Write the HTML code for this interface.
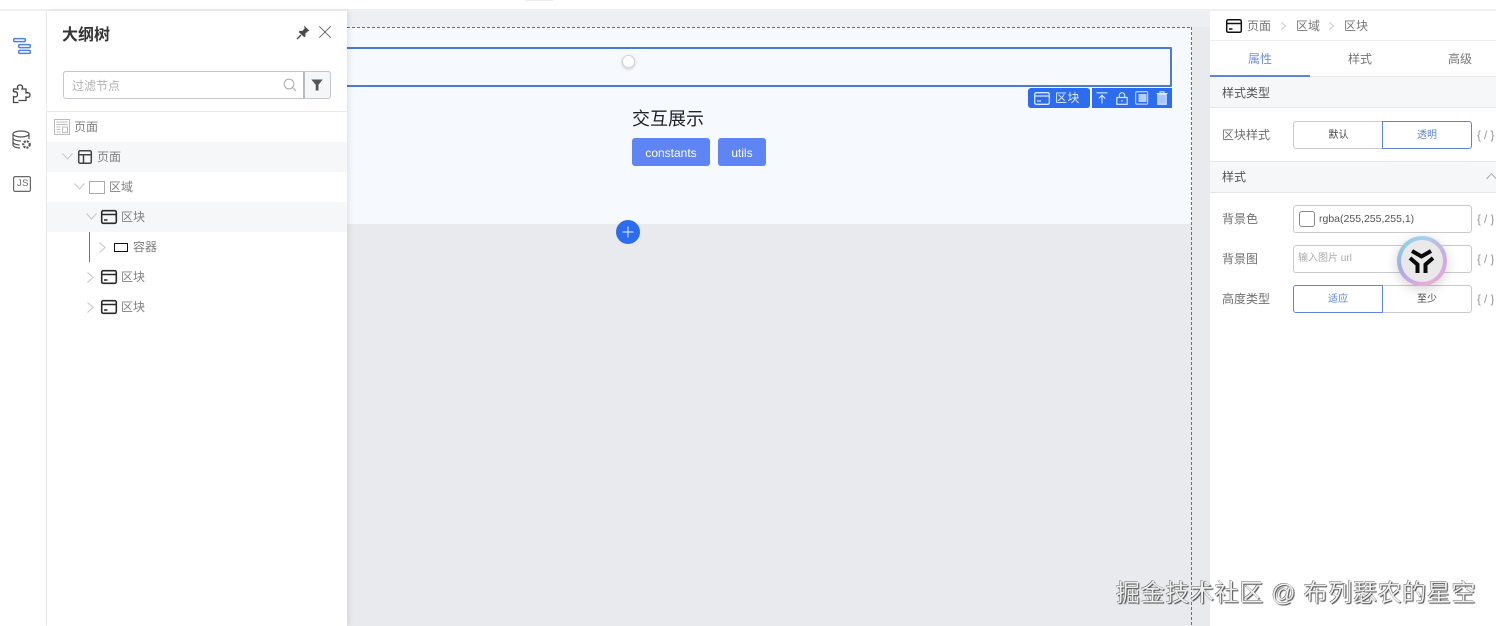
<!DOCTYPE html>
<html lang="zh"><head><meta charset="utf-8">
<style>
html,body{margin:0;padding:0;width:1496px;height:626px;overflow:hidden;background:#fff;font-family:"Liberation Sans","Noto Sans CJK SC",sans-serif;}
.a{position:absolute;box-sizing:border-box;}
.t{position:absolute;white-space:nowrap;line-height:16px;}
svg{position:absolute;overflow:visible;}
.tree{font-size:12px;color:#808080;}
.rl{font-size:12px;color:#707070;}
.ex{font-size:12px;color:#999;letter-spacing:3px;}
</style></head><body>
<div class="a" style="left:0;top:0;width:1496px;height:626px;overflow:hidden">
<!-- top -->
<div class="a" style="left:0;top:9px;width:1496px;height:2px;background:#eeeff1"></div>
<div class="a" style="left:525px;top:0;width:28px;height:1px;background:#eee"></div>

<!-- canvas -->
<div class="a" style="left:347px;top:11px;width:863px;height:615px;background:#e8eaed"></div>
<div class="a" style="left:347px;top:11px;width:863px;height:16px;background:#eeeff2"></div>
<div class="a" style="left:347px;top:27px;width:845px;height:197px;background:#f6faff"></div>
<div class="a" style="left:347px;top:27px;width:845px;height:1px;background:repeating-linear-gradient(90deg,#3a70e0 0 3px,transparent 3px 5px)"></div>
<div class="a" style="left:1191px;top:27px;width:1px;height:599px;background:repeating-linear-gradient(180deg,#3a70e0 0 3px,transparent 3px 5px)"></div>
<div class="a" style="left:340px;top:47px;width:832px;height:40px;border:2px solid #4a7bd6;border-radius:1px"></div>
<div class="a" style="left:622px;top:55px;width:13px;height:13px;border-radius:50%;background:#fff;border:1px solid #d4d4d4;box-shadow:0 1px 3px rgba(0,0,0,.2)"></div>

<!-- block toolbar -->
<div class="a" style="left:1028px;top:88px;width:62px;height:20px;background:#2b6cf0;border-radius:3px"></div>
<svg style="left:1034px;top:92px" width="16" height="13" viewBox="0 0 16 13" fill="none" stroke="#d9e6ff" stroke-width="1.3"><rect x=".7" y=".7" width="14.6" height="11.6" rx="1.5"/><path d="M1 4h14M3 9h4"/></svg>
<div class="t" style="left:1055px;top:90px;font-size:12px;color:#e3ecff;letter-spacing:.5px">区块</div>
<div class="a" style="left:1092px;top:88px;width:80px;height:20px;background:#2b6cf0"></div>
<svg style="left:1096px;top:92px" width="12" height="12" viewBox="0 0 12 12" fill="none" stroke="#dbe7ff" stroke-width="1.1"><path d="M.5 .8h11M6 11.5V3.5M2.8 6.5 6 3.2l3.2 3.3"/></svg>
<svg style="left:1116px;top:92px" width="12" height="13" viewBox="0 0 12 13" fill="none" stroke="#dbe7ff" stroke-width="1.2"><rect x=".8" y="5.5" width="10.4" height="6.8"/><path d="M3.3 5.5V3.4a2.7 2.7 0 0 1 5.4 0v2.1"/><path d="M6 8v2"/></svg>
<svg style="left:1135px;top:91px" width="14" height="14" viewBox="0 0 14 14" fill="none" stroke="#dbe7ff" stroke-width="1"><rect x=".7" y=".7" width="12" height="12.4" rx="1"/><rect x="3.5" y="3" width="8" height="8" fill="#b9cffb" stroke="none"/></svg>
<svg style="left:1156px;top:91px" width="12" height="14" viewBox="0 0 12 14" fill="none" stroke="#dbe7ff" stroke-width="1.1"><path d="M.5 2.500h11M4 2.500V.8h4v1.700"/><rect x="1.800" y="3.500" width="8.400" height="9.800" fill="#a9c5fb"/></svg>

<!-- content -->
<div class="t" style="left:632px;top:108px;font-size:18px;line-height:22px;color:#1d2129">交互展示</div>
<div class="a" style="left:632px;top:138px;width:78px;height:28px;background:#5f85f4;border-radius:3px;color:#fff;font-size:12px;line-height:30px;text-align:center">constants</div>
<div class="a" style="left:718px;top:138px;width:48px;height:28px;background:#5f85f4;border-radius:3px;color:#fff;font-size:12px;line-height:30px;text-align:center">utils</div>
<div class="a" style="left:616px;top:220px;width:24px;height:24px;border-radius:50%;background:#2b6cf0"></div>
<svg style="left:622px;top:226px" width="12" height="12" viewBox="0 0 12 12" stroke="#e8f0ff" stroke-width="1"><path d="M6 .5v11M.5 6h11"/></svg>

<!-- left rail -->
<div class="a" style="left:0;top:11px;width:47px;height:615px;background:#fff;border-right:1px solid #eceef0"></div>
<svg style="left:12px;top:36px" width="20" height="20" viewBox="0 0 20 20" fill="none" stroke="#4d82e4" stroke-width="1.500"><rect x="1.700" y="2.600" width="11.600" height="3" rx="1.200"/><rect x="6.700" y="8.600" width="11.600" height="3" rx="1.200"/><rect x="6.700" y="14.400" width="11.600" height="3" rx="1.200"/></svg>
<svg style="left:12px;top:84px" width="20" height="20" viewBox="0 0 20 20" fill="none" stroke="#444" stroke-width="1.300"><path d="M1.500 8V5h4.500c-1.500-3 .5-4 2-4s3.500 1 2 4H14v4c3-1 4 .6 4 2s-1 3-4 2v3.500H6.500M1.500 8c3-1 4 .6 4 2.500s-1 3-4 2V18.500H6.500"/></svg>
<svg style="left:12px;top:130px" width="20" height="20" viewBox="0 0 20 20" fill="none" stroke="#555" stroke-width="1.200"><ellipse cx="9" cy="4" rx="8" ry="3"/><path d="M1 4v11c0 1.600 3 2.800 7 3M17 4v5M1 8c0 1.700 3.500 3 8 3M1 12c0 1.700 3 2.800 6.500 3"/><circle cx="14.500" cy="14.500" r="3.200" stroke-width="2.200" stroke-dasharray="2 1"/></svg>
<svg style="left:13px;top:176px" width="18" height="16" viewBox="0 0 18 16" fill="none" stroke="#666" stroke-width="1.200"><rect x=".6" y=".6" width="16.800" height="14.800" rx="1.500"/></svg>
<div class="t" style="left:17px;top:176px;font-size:9.500px;color:#666;letter-spacing:.4px">JS</div>

<!-- outline panel -->
<div class="a" style="left:47px;top:11px;width:300px;height:615px;background:#fff;box-shadow:2px 0 5px rgba(0,0,0,.09)"></div>
<div class="t" style="left:62px;top:26px;font-size:16px;line-height:20px;font-weight:700;color:#333">大纲树</div>
<svg style="left:296px;top:25px" width="14" height="15" viewBox="0 0 14 15" fill="#4a4a4a"><path d="M8 .5 13.500 5.700l-1.600.5-2.600 2.500.2 2.600-1.200 1L2.700 7l1-1.200 2.600.2 2.400-2.600z"/><path d="M5 10 1 14" stroke="#4a4a4a" stroke-width="1.300"/></svg>
<svg style="left:319px;top:26px" width="12" height="12" viewBox="0 0 12 12" stroke="#666" stroke-width="1"><path d="M.3 .3l11.400 11.400M11.700 .3.300 11.700"/></svg>
<div class="a" style="left:63px;top:71px;width:268px;height:28px;border:1px solid #c4c7cc;border-radius:3px;background:#fff"></div>
<div class="a" style="left:303px;top:71px;width:28px;height:28px;border:1px solid #c4c7cc;border-left:2px solid #bbb;border-radius:0 3px 3px 0;background:#f5f6f7"></div>
<div class="t" style="left:72px;top:78px;font-size:12px;color:#b2b2b2">过滤节点</div>
<svg style="left:283px;top:78px" width="14" height="14" viewBox="0 0 14 14" fill="none" stroke="#aaa" stroke-width="1"><circle cx="6" cy="6" r="4.900"/><path d="M9.700 9.700 13 13"/></svg>
<svg style="left:311px;top:79px" width="12" height="12" viewBox="0 0 12 12" fill="#555"><path d="M.3 .5h11.400L7.500 5.800V11.500H4.700V5.800z"/></svg>
<div class="a" style="left:47px;top:111px;width:300px;height:1px;background:#e8eaec"></div>

<div class="a" style="left:47px;top:142px;width:300px;height:30px;background:#f6f7f8"></div>
<div class="a" style="left:47px;top:202px;width:300px;height:30px;background:#f6f7f8"></div>
<div class="a" style="left:89px;top:232px;width:1px;height:30px;background:#4f80a8"></div>

<svg style="left:54px;top:119px" width="16" height="16" viewBox="0 0 16 16" fill="none" stroke="#bbb" stroke-width="1"><rect x=".5" y=".5" width="15" height="15"/><path d="M2.500 3h11M2.500 5.500h11M2.500 8h4M2.500 10.500h4M2.500 13h4M8.500 8h5v5.500h-5z"/></svg>
<div class="t tree" style="left:74px;top:119px">页面</div>

<svg style="left:62px;top:153px" width="11" height="7" viewBox="0 0 11 7" fill="none" stroke="#c4c4c4" stroke-width="1"><path d="M.5 .5l5 5.500 5-5.500"/></svg>
<svg style="left:78px;top:150px" width="14" height="14" viewBox="0 0 14 14" fill="none" stroke="#444" stroke-width="1.500"><rect x=".7" y=".7" width="12.600" height="12.600" rx="1.500"/><path d="M1 4.800h12M5.500 4.800V13"/></svg>
<div class="t tree" style="left:97px;top:149px">页面</div>

<svg style="left:74px;top:183px" width="11" height="7" viewBox="0 0 11 7" fill="none" stroke="#c4c4c4" stroke-width="1"><path d="M.5 .5l5 5.500 5-5.500"/></svg>
<div class="a" style="left:89px;top:181px;width:16px;height:13px;border:1px solid #aaa"></div>
<div class="t tree" style="left:109px;top:179px">区域</div>

<svg style="left:86px;top:213px" width="11" height="7" viewBox="0 0 11 7" fill="none" stroke="#c4c4c4" stroke-width="1"><path d="M.5 .5l5 5.500 5-5.500"/></svg>
<svg style="left:101px;top:210px" width="16" height="14" viewBox="0 0 16 14" fill="none" stroke="#2a2a2a" stroke-width="1.600"><rect x=".7" y=".7" width="14.600" height="12.600" rx="1.500"/><path d="M1 4.500h14M3 10h3.500"/></svg>
<div class="t tree" style="left:121px;top:209px">区块</div>

<svg style="left:99px;top:242px" width="7" height="11" viewBox="0 0 7 11" fill="none" stroke="#c4c4c4" stroke-width="1"><path d="M.5 .5 6 5.500l-5.500 5"/></svg>
<div class="a" style="left:114px;top:243px;width:14px;height:9px;border:1.500px solid #111"></div>
<div class="t tree" style="left:133px;top:239px">容器</div>

<svg style="left:87px;top:272px" width="7" height="11" viewBox="0 0 7 11" fill="none" stroke="#c4c4c4" stroke-width="1"><path d="M.5 .5 6 5.500l-5.500 5"/></svg>
<svg style="left:101px;top:270px" width="16" height="14" viewBox="0 0 16 14" fill="none" stroke="#2a2a2a" stroke-width="1.600"><rect x=".7" y=".7" width="14.600" height="12.600" rx="1.500"/><path d="M1 4.500h14M3 10h3.500"/></svg>
<div class="t tree" style="left:121px;top:269px">区块</div>

<svg style="left:87px;top:302px" width="7" height="11" viewBox="0 0 7 11" fill="none" stroke="#c4c4c4" stroke-width="1"><path d="M.5 .5 6 5.500l-5.500 5"/></svg>
<svg style="left:101px;top:300px" width="16" height="14" viewBox="0 0 16 14" fill="none" stroke="#2a2a2a" stroke-width="1.600"><rect x=".7" y=".7" width="14.600" height="12.600" rx="1.500"/><path d="M1 4.500h14M3 10h3.500"/></svg>
<div class="t tree" style="left:121px;top:299px">区块</div>

<!-- right panel -->
<div class="a" style="left:1210px;top:11px;width:286px;height:615px;background:#fff"></div>
<svg style="left:1226px;top:19px" width="16" height="14" viewBox="0 0 16 14" fill="none" stroke="#111" stroke-width="1.500"><rect x=".7" y=".7" width="14.600" height="12.600" rx="1.500"/><path d="M1 4.500h14M3 10h3.500"/></svg>
<div class="t rl" style="left:1247px;top:18px;color:#777">页面</div>
<svg style="left:1281px;top:22px" width="5" height="8" viewBox="0 0 5 8" fill="none" stroke="#c4c4c4" stroke-width="1"><path d="M.5 .5 4.500 4 .5 7.500"/></svg>
<div class="t rl" style="left:1296px;top:18px;color:#777">区域</div>
<svg style="left:1329px;top:22px" width="5" height="8" viewBox="0 0 5 8" fill="none" stroke="#c4c4c4" stroke-width="1"><path d="M.5 .5 4.500 4 .5 7.500"/></svg>
<div class="t rl" style="left:1344px;top:18px;color:#777">区块</div>
<div class="a" style="left:1210px;top:40px;width:286px;height:1px;background:#eceef0"></div>
<div class="t" style="left:1248px;top:51px;font-size:12px;color:#6d8fe4">属性</div>
<div class="t rl" style="left:1348px;top:51px;color:#777">样式</div>
<div class="t rl" style="left:1448px;top:51px;color:#777">高级</div>
<div class="a" style="left:1210px;top:76px;width:286px;height:1px;background:#e4e6e8"></div>
<div class="a" style="left:1210px;top:75px;width:100px;height:2px;background:#5f85d8"></div>

<div class="a" style="left:1210px;top:77px;width:286px;height:31px;background:#f6f7f8;border-bottom:1px solid #e4e6e8"></div>
<div class="t rl" style="left:1222px;top:85px;color:#555">样式类型</div>
<div class="t rl" style="left:1222px;top:127px">区块样式</div>
<div class="a" style="left:1293px;top:121px;width:90px;height:28px;border:1px solid #c8cacd;border-right:0;border-radius:3px 0 0 3px;text-align:center;font-size:10px;line-height:28px;color:#444">默认</div>
<div class="a" style="left:1382px;top:121px;width:90px;height:28px;border:1px solid #5f85d8;border-radius:0 3px 3px 0;text-align:center;font-size:10px;line-height:28px;color:#5f85d8">透明</div>
<div class="t ex" style="left:1477px;top:127px">{/}</div>

<div class="a" style="left:1210px;top:161px;width:286px;height:32px;background:#f6f7f8;border-top:1px solid #e4e6e8;border-bottom:1px solid #e4e6e8"></div>
<div class="t rl" style="left:1222px;top:169px;color:#555">样式</div>
<svg style="left:1486px;top:173px" width="11" height="7" viewBox="0 0 11 7" fill="none" stroke="#aaa" stroke-width="1"><path d="M.5 6 5.500 .7l5 5.300"/></svg>

<div class="t rl" style="left:1222px;top:211px">背景色</div>
<div class="a" style="left:1293px;top:205px;width:179px;height:28px;border:1px solid #c8cacd;border-radius:3px"></div>
<div class="a" style="left:1299px;top:211px;width:16px;height:16px;border:1px solid #888;border-radius:3px"></div>
<div class="t" style="left:1319px;top:211px;font-size:10.500px;color:#555">rgba(255,255,255,1)</div>
<div class="t ex" style="left:1477px;top:211px">{/}</div>

<div class="t rl" style="left:1222px;top:251px">背景图</div>
<div class="a" style="left:1293px;top:245px;width:179px;height:28px;border:1px solid #c8cacd;border-radius:3px"></div>
<div class="t" style="left:1298px;top:251px;font-size:10px;color:#aaa">输入图片 url</div>
<div class="t ex" style="left:1477px;top:251px">{/}</div>

<div class="t rl" style="left:1222px;top:291px">高度类型</div>
<div class="a" style="left:1382px;top:285px;width:90px;height:28px;border:1px solid #c8cacd;border-radius:0 3px 3px 0;text-align:center;font-size:10px;line-height:28px;color:#444">至少</div>
<div class="a" style="left:1293px;top:285px;width:90px;height:28px;border:1px solid #5f85d8;border-radius:3px 0 0 3px;text-align:center;font-size:10px;line-height:28px;color:#5f85d8">适应</div>
<div class="t ex" style="left:1477px;top:291px">{/}</div>

<!-- floating logo -->
<div class="a" style="left:1397px;top:236px;width:50px;height:50px;border-radius:50%;background:conic-gradient(#a6d2e6 0deg,#c6aee4 70deg,#d8a8e0 110deg,#e9aed6 165deg,#c8a8e2 215deg,#a4aae8 255deg,#94cce6 310deg,#a6d2e6 360deg);box-shadow:0 3px 12px rgba(0,0,0,.18)"></div>
<div class="a" style="left:1401px;top:240px;width:42px;height:42px;border-radius:50%;background:#e9e9e9"></div>
<svg style="left:1407px;top:246px" width="30" height="30" viewBox="0 0 30 30" fill="none" stroke="#0a0a0a" stroke-width="4"><path d="M5 5 14.500 10.500 24 5M3 12 10.500 18.500V27M26 12 18.500 18.500V27"/></svg>

<!-- watermark -->
<div class="t" style="left:1116px;top:580px;font-size:24px;line-height:28px;letter-spacing:.65px;color:#eee;text-shadow:1px 1px 1px #444,-.5px -.5px 0 #666;">掘金技术社区 @ 布列瑟农的星空</div>
</div>
</body></html>
